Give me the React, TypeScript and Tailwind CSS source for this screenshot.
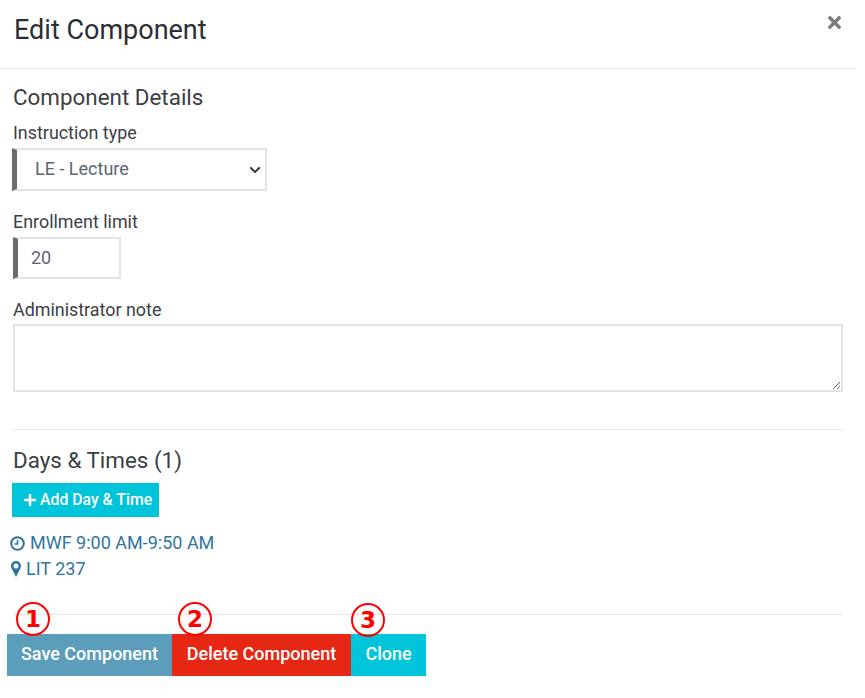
import { FaChevronDown, FaPlus, FaTimes } from "react-icons/fa";

function Marker({ n, className }: { n: number; className: string }) {
  return (
    <span
      className={`absolute flex h-[34px] w-[34px] items-center justify-center rounded-full border-2 border-[#ff0000] pt-[1px] font-['DejaVu_Sans',sans-serif] text-[23px] font-bold leading-none text-[#ff0000] ${className}`}
    >
      {n}
    </span>
  );
}

export default function App() {
  return (
    <div className="h-[698px] w-[865px] bg-white font-['Roboto',sans-serif] text-[16px] text-[#333]">
      <div className="w-[856px]">
        <div className="flex h-[69px] items-start justify-between border-b border-[#eeeeee] pl-[14px] pr-[12px]">
          <h1 className="mt-[12px] text-[27px] leading-[36px] font-normal text-[#2b2f33]">Edit Component</h1>
          <FaTimes className="mt-[13px] text-[19px] text-[#7d7d7d]" />
        </div>

        <div className="pl-[13px] pr-[13px]">
          <h2 className="mt-[15px] text-[22.4px] leading-[26px] text-[#3a4046]">Component Details</h2>
          <label className="mt-[12px] block text-[17.9px] leading-[22px] text-[#3a4046]">Instruction type</label>
          <div className="relative mt-[4px] ml-[-1px] h-[43px] w-[255px]">
            <select
              defaultValue="LE"
              className="block h-full w-full appearance-none border-2 border-l-[5px] border-[#dfe4e9] border-l-[#6b6b6b] bg-white pb-[2px] pl-[18px] text-[18px] text-[#5c6670] outline-none"
            >
              <option value="LE">LE - Lecture</option>
            </select>
            <FaChevronDown className="absolute top-[16px] right-[6px] text-[12px] text-[#333]" />
          </div>
          <label className="mt-[20px] block text-[17.9px] leading-[22px] text-[#3a4046]">Enrollment limit</label>
          <input
            defaultValue="20"
            className="mt-[4px] block h-[42px] w-[108px] border-2 border-l-[5px] border-[#dfe4e9] border-l-[#6b6b6b] bg-white pb-[2px] pl-[13px] text-[18px] text-[#5c6670] outline-none"
          />
          <label className="mt-[20px] block text-[17.9px] leading-[22px] text-[#3a4046]">Administrator note</label>
          <textarea className="mt-[3px] block h-[68px] w-[830px] border-2 border-[#dfe4e9] bg-white outline-none" />
          <div className="mt-[37px] border-t border-[#e6e6e6]" />
          <h2 className="mt-[17px] text-[22.4px] leading-[26px] text-[#3a4046]">Days &amp; Times (1)</h2>
          <button className="mt-[10px] ml-[-1px] flex h-[34px] items-center gap-[3px] bg-[#00c4d9] pl-[11px] pr-[7px] text-[15.8px] font-medium text-white">
            <FaPlus className="text-[14px]" />
            Add Day &amp; Time
          </button>
          <div className="mt-[14px] ml-[-3px] flex items-center gap-[5px] text-[18px] leading-[24px] text-[#2f75a0]">
            <svg viewBox="0 0 16 16" className="h-[15px] w-[15px]" fill="none" stroke="currentColor">
              <circle cx="8" cy="8" r="6.7" strokeWidth="2.2" />
              <path d="M8 4v4.6H4.8" strokeWidth="1.7" />
            </svg>
            MWF 9:00 AM-9:50 AM
          </div>
          <div className="mt-[2px] ml-[-2px] flex items-center gap-[5px] text-[18px] leading-[24px] text-[#2f75a0]">
            <svg viewBox="0 0 10 16" className="h-[16px] w-[10px]" fill="currentColor">
              <path
                fillRule="evenodd"
                d="M5 0C2.2 0 0 2.2 0 5c0 1 .3 1.9.8 2.8L5 16l4.2-8.2c.5-.9.8-1.8.8-2.8 0-2.8-2.2-5-5-5zm0 7.5A2.5 2.5 0 1 1 5 2.5a2.5 2.5 0 0 1 0 5z"
              />
            </svg>
            LIT 237
          </div>
          <div className="mt-[33px] border-t border-[#e6e6e6]" />
        </div>

        <div className="relative mt-[19px] ml-[7px] flex h-[42px] w-fit text-[18px] font-medium text-white">
          <Marker n={1} className="top-[-32px] left-[9px]" />
          <Marker n={2} className="top-[-32px] left-[171px]" />
          <Marker n={3} className="top-[-31px] left-[344px]" />
          <button className="w-[165px] bg-[#5b9dbb] pb-[3px]">Save Component</button>
          <button className="w-[179px] bg-[#e52714] pb-[3px]">Delete Component</button>
          <button className="w-[75px] bg-[#00c4d9] pb-[3px]">Clone</button>
        </div>
      </div>
    </div>
  );
}
